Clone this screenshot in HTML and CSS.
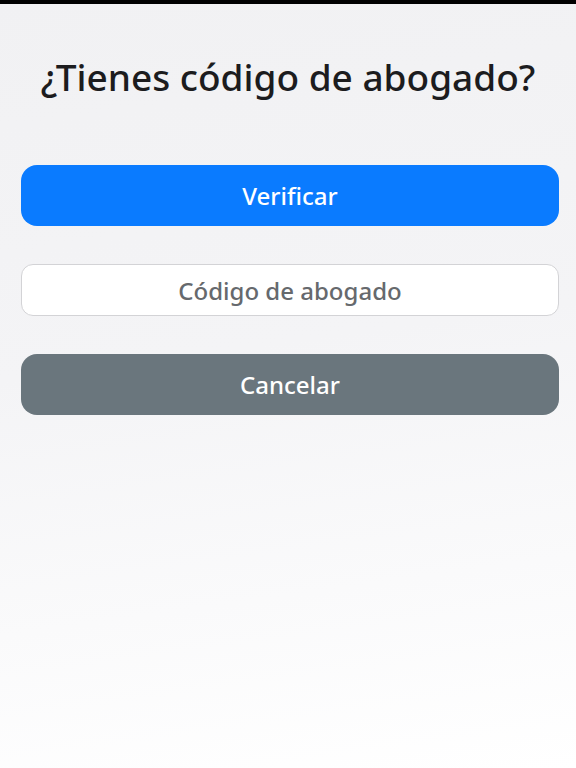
FILE: index.html
```html
<!DOCTYPE html>
<html lang="es">
<head>
<meta charset="utf-8">
<title>Código de abogado</title>
<link rel="stylesheet" href="styles.css">
</head>
<body>
<div class="topbar"></div>
<main class="page">
  <h1 class="title">¿Tienes código de abogado?</h1>
  <div class="actions">
    <button class="btn btn-primary" type="button">Verificar</button>
    <input class="code-input" type="text" placeholder="Código de abogado">
    <button class="btn btn-secondary" type="button">Cancelar</button>
  </div>
</main>
</body>
</html>
```

FILE: styles.css
```css
html, body {
  margin: 0;
  padding: 0;
  height: 100%;
}
body {
  font-family: "Noto Sans", "Open Sans", sans-serif;
  background: linear-gradient(172deg, #f1f1f3 0%, #f4f4f6 45%, #fafafb 75%, #ffffff 100%);
  min-height: 768px;
}
.topbar {
  height: 4px;
  background: #000;
}
.page {
  display: flex;
  flex-direction: column;
  padding: 0 17px 0 21px;
}
.title {
  margin: 48px 4px 0 0;
  text-align: center;
  font-size: 37px;
  line-height: 50px;
  font-weight: 500;
  color: #1c1c1e;
}
.actions {
  display: flex;
  flex-direction: column;
  gap: 38px;
  margin-top: 63px;
}
.btn {
  display: block;
  width: 100%;
  height: 61px;
  border: none;
  border-radius: 16px;
  font-family: inherit;
  font-size: 24px;
  font-weight: 500;
  color: #fff;
}
.btn-primary {
  background: #0a7bff;
}
.btn-secondary {
  background: #6a767d;
}
.code-input {
  box-sizing: border-box;
  width: 100%;
  height: 52px;
  margin: 0;
  border: 1px solid #d3d3d6;
  border-radius: 12px;
  background: #fff;
  text-align: center;
  font-family: inherit;
  font-size: 24px;
  font-weight: 500;
  color: #333;
}
.code-input::placeholder {
  color: #66696d;
  opacity: 1;
}
```
